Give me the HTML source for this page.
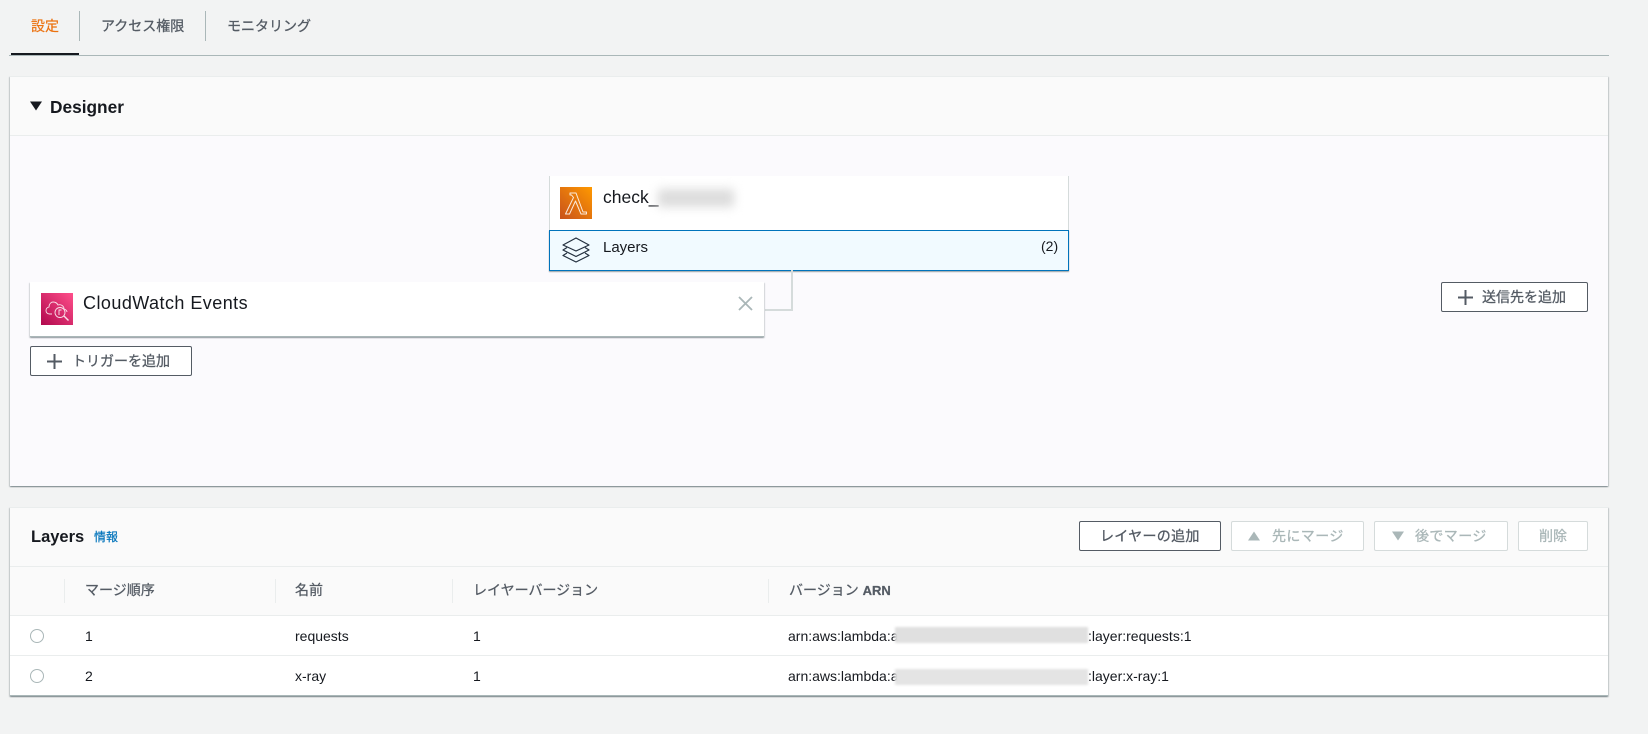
<!DOCTYPE html>
<html lang="ja"><head><meta charset="utf-8"><title>Lambda</title>
<style>
html,body{margin:0;padding:0}
body{width:1648px;height:734px;background:#f2f3f3;position:relative;overflow:hidden;font-family:"Liberation Sans","Noto Sans CJK JP",sans-serif;color:#16191f;font-size:14px}
.a,.t{position:absolute}
.t{white-space:nowrap;line-height:20px}
.b{position:absolute;box-sizing:border-box;border:1px solid #545b64;border-radius:2px;background:#fff}
.d{position:absolute;box-sizing:border-box;border:1px solid #d5dbdb;border-radius:2px;background:#fff}
.g{color:#545b64;-webkit-text-stroke:.3px #545b64}
.off{color:#aab7b8;-webkit-text-stroke:.3px #aab7b8}
.h{color:#545b64;-webkit-text-stroke:.25px #545b64}
</style></head><body>
<div class="t" style="left:31px;top:16px;color:#ec7211;font-size:14px;-webkit-text-stroke:.2px #ec7211">設定</div>
<div class="a" style="left:79px;top:11px;width:1px;height:30px;background:#aab7b8"></div>
<div class="t g" style="left:101px;top:16px">アクセス権限</div>
<div class="a" style="left:205px;top:11px;width:1px;height:30px;background:#aab7b8"></div>
<div class="t g" style="left:227px;top:16px">モニタリング</div>
<div class="a" style="left:11px;top:53px;width:68px;height:2px;background:#16191f"></div>
<div class="a" style="left:9px;top:55px;width:1600px;height:1px;background:#aab7b8"></div>

<div class="a" style="left:10px;top:76px;width:1598px;height:409px;background:#fbfafd;border-top:1px solid #eaeded;box-shadow:0 1px 1px 0 rgba(0,28,36,.3),1px 1px 1px 0 rgba(0,28,36,.15),-1px 1px 1px 0 rgba(0,28,36,.15)"></div>
<div class="a" style="left:10px;top:77px;width:1598px;height:58px;background:#fafafa;border-bottom:1px solid #eaeded"></div>
<svg class="a" style="left:30px;top:101px" width="12" height="10"><path d="M0 .5h12L6 9.500z" fill="#16191f"/></svg>
<div class="t" style="left:50px;top:96px;font-size:17.300px;line-height:22px;font-weight:700">Designer</div>

<div class="a" style="left:549px;top:176px;width:520px;height:54px;background:#fff;border-left:1px solid #d5dbdb;border-right:1px solid #d5dbdb;box-sizing:border-box"></div>
<svg class="a" style="left:560px;top:187px" width="32" height="32"><defs><linearGradient id="o" x1="0" y1="1" x2="1" y2="0"><stop offset="0" stop-color="#c8511b"/><stop offset="1" stop-color="#f90"/></linearGradient></defs><rect width="32" height="32" fill="url(#o)"/><path d="M10 6h6l7 19h3.500v2H21L15.500 14 9.500 27H5.500l8-16.500L11.500 8H10z" fill="none" stroke="#fff" stroke-width="1" stroke-linejoin="round" opacity=".85"/></svg>
<div class="t" style="left:603px;top:186px;font-size:17.500px;line-height:22px">check_</div>
<div class="a" style="left:658px;top:189px;width:76px;height:18px;background:#dcdcdc;filter:blur(5px)"></div>
<div class="a" style="left:549px;top:230px;width:520px;height:41px;box-sizing:border-box;background:#f1faff;border:1px solid #0073bb;box-shadow:0 1px 1px rgba(0,28,36,.4)"></div>
<svg class="a" style="left:561px;top:236px" width="30" height="28" fill="none" stroke="#232f3e" stroke-width="1.200" stroke-linejoin="round"><path d="M15 2 28 9 15 15 2 9z"/><path d="M6 11.500 2 14 15 20.500 28 14l-4-2.500"/><path d="M6 17 2 19.500 15 26 28 19.500 24 17"/></svg>
<div class="t" style="left:603px;top:238px;font-size:15px">Layers</div>
<div class="t" style="left:1041px;top:236px;font-size:14px">(2)</div>

<svg class="a" style="left:760px;top:270px" width="40" height="44" fill="none" stroke="#d5dbdb" stroke-width="2"><path d="M32 0V40H5"/></svg>
<div class="a" style="left:30px;top:282px;width:734px;height:55px;box-sizing:border-box;background:#fff;border-bottom:1px solid #aab7b8;box-shadow:0 1px 1px rgba(0,28,36,.25),1px 1px 1px rgba(0,28,36,.12),-1px 1px 1px rgba(0,28,36,.12)"></div>
<svg class="a" style="left:41px;top:293px" width="32" height="32"><defs><linearGradient id="p" x1="0" y1="1" x2="1" y2="0"><stop offset="0" stop-color="#b0084d"/><stop offset="1" stop-color="#ff4f8b"/></linearGradient></defs><rect width="32" height="32" fill="url(#p)"/><g fill="none" stroke="#fff" stroke-width=".9" opacity=".85"><path d="M11 21H8.500C6 21 5 19 5 17.500S6 14.500 8 14c0-3 2-5 4-5 2 0 4 1 5 3 3-1 6 1 6 4 2 .5 3 2 3 3"/><circle cx="19" cy="19.500" r="5"/><path d="M23 23l4.500 4.500" stroke-width="1.400"/><path d="M18 22v-5h2.500"/></g></svg>
<div class="t" style="left:83px;top:292px;font-size:18px;line-height:22px;letter-spacing:.45px">CloudWatch Events</div>
<svg class="a" style="left:738px;top:296px" width="15" height="15" fill="none" stroke="#aab7b8" stroke-width="1.800"><path d="M1 1 14 14M14 1 1 14"/></svg>

<div class="b" style="left:30px;top:346px;width:162px;height:30px"></div>
<svg class="a" style="left:47px;top:354px" width="15" height="15" fill="none" stroke="#545b64" stroke-width="2"><path d="M7.500 0V15M0 7.500H15"/></svg>
<div class="t g" style="left:72px;top:351px">トリガーを追加</div>
<div class="b" style="left:1441px;top:282px;width:147px;height:30px"></div>
<svg class="a" style="left:1458px;top:290px" width="15" height="15" fill="none" stroke="#545b64" stroke-width="2"><path d="M7.500 0V15M0 7.500H15"/></svg>
<div class="t g" style="left:1482px;top:287px">送信先を追加</div>

<div class="a" style="left:10px;top:507px;width:1598px;height:189px;background:#fff;border-top:1px solid #eaeded;border-bottom:1px solid #aab7b8;box-sizing:border-box;box-shadow:0 1px 1px 0 rgba(0,28,36,.3),1px 1px 1px 0 rgba(0,28,36,.15),-1px 1px 1px 0 rgba(0,28,36,.15)"></div>
<div class="a" style="left:10px;top:508px;width:1598px;height:107px;background:#fafafa"></div>
<div class="a" style="left:10px;top:566px;width:1598px;height:1px;background:#eaeded"></div>
<div class="a" style="left:10px;top:615px;width:1598px;height:1px;background:#eaeded"></div>
<div class="a" style="left:10px;top:655px;width:1598px;height:1px;background:#eaeded"></div>
<div class="t" style="left:31px;top:526px;font-size:16.500px;line-height:22px;font-weight:700">Layers</div>
<div class="t" style="left:94px;top:527px;font-size:12px;color:#0073bb;-webkit-text-stroke:.2px #0073bb">情報</div>

<div class="b" style="left:1079px;top:521px;width:142px;height:30px"></div>
<div class="t g" style="left:1100px;top:526px;letter-spacing:.3px">レイヤーの追加</div>
<div class="d" style="left:1231px;top:521px;width:133px;height:30px"></div>
<svg class="a" style="left:1248px;top:531px" width="12" height="10"><path d="M6 .5l6 9H0z" fill="#aab7b8"/></svg>
<div class="t off" style="left:1272px;top:526px;letter-spacing:.4px">先にマージ</div>
<div class="d" style="left:1374px;top:521px;width:134px;height:30px"></div>
<svg class="a" style="left:1392px;top:531px" width="12" height="10"><path d="M0 .5h12L6 9.500z" fill="#aab7b8"/></svg>
<div class="t off" style="left:1415px;top:526px;letter-spacing:.4px">後でマージ</div>
<div class="d" style="left:1518px;top:521px;width:70px;height:30px"></div>
<div class="t off" style="left:1539px;top:526px">削除</div>

<div class="a" style="left:64px;top:579px;width:1px;height:24px;background:#eaeded"></div>
<div class="a" style="left:275px;top:579px;width:1px;height:24px;background:#eaeded"></div>
<div class="a" style="left:452px;top:579px;width:1px;height:24px;background:#eaeded"></div>
<div class="a" style="left:768px;top:579px;width:1px;height:24px;background:#eaeded"></div>
<div class="t h" style="left:85px;top:580px">マージ順序</div>
<div class="t h" style="left:295px;top:580px">名前</div>
<div class="t h" style="left:473px;top:580px">レイヤーバージョン</div>
<div class="t h" style="left:789px;top:580px">バージョン <b style="font-size:13px">ARN</b></div>

<div class="a" style="left:30px;top:629px;width:12px;height:12px;border:1px solid #aab7b8;border-radius:50%;background:#fff"></div>
<div class="t" style="left:85px;top:626px">1</div>
<div class="t" style="left:295px;top:626px">requests</div>
<div class="t" style="left:473px;top:626px">1</div>
<div class="t" style="left:788px;top:626px">arn:aws:lambda:a</div>
<div class="t" style="left:1088px;top:626px">:layer:requests:1</div>
<div class="a" style="left:895px;top:627px;width:193px;height:16px;background:#e0e0e0;filter:blur(1px)"></div>

<div class="a" style="left:30px;top:669px;width:12px;height:12px;border:1px solid #aab7b8;border-radius:50%;background:#fff"></div>
<div class="t" style="left:85px;top:666px">2</div>
<div class="t" style="left:295px;top:666px">x-ray</div>
<div class="t" style="left:473px;top:666px">1</div>
<div class="t" style="left:788px;top:666px">arn:aws:lambda:a</div>
<div class="t" style="left:1088px;top:666px">:layer:x-ray:1</div>
<div class="a" style="left:895px;top:669px;width:193px;height:16px;background:#e4e4e4;filter:blur(1px)"></div>
</body></html>
